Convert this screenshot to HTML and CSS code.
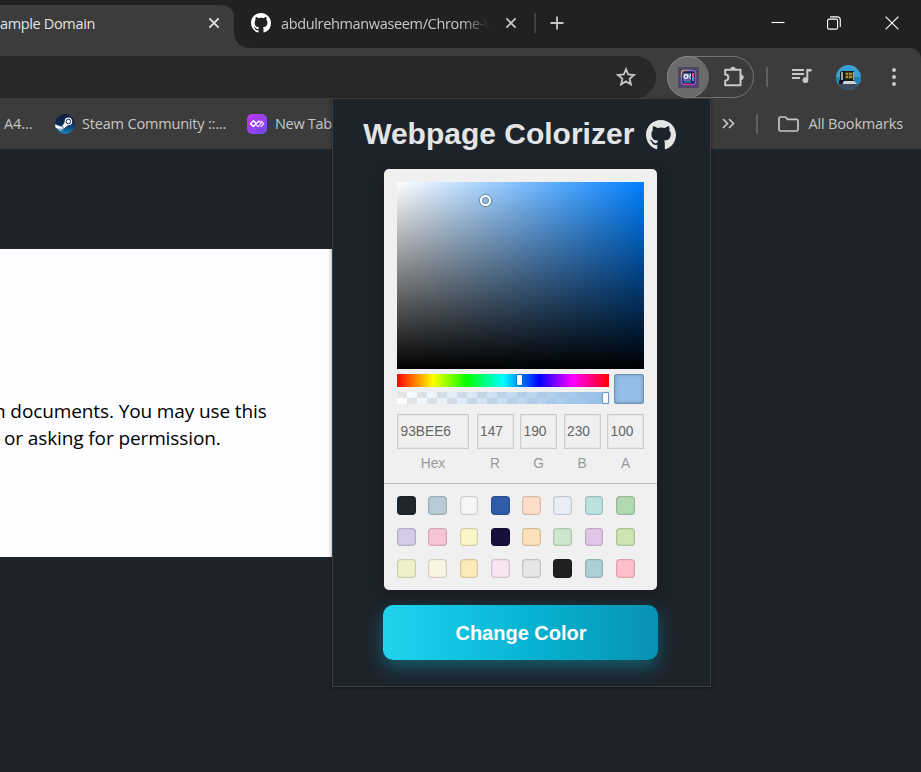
FILE: index.html
```html
<!DOCTYPE html>
<html lang="en">
<head>
<meta charset="utf-8">
<title>Webpage Colorizer</title>
<link rel="stylesheet" href="styles.css">
</head>
<body>
<svg class="defs" width="0" height="0">
  <symbol id="cat" viewBox="0 0 16 16"><path d="M8 0C3.58 0 0 3.58 0 8c0 3.54 2.29 6.53 5.47 7.59.4.07.55-.17.55-.38 0-.19-.01-.82-.01-1.49-2.01.37-2.53-.49-2.69-.94-.09-.23-.48-.94-.82-1.13-.28-.15-.68-.52-.01-.53.63-.01 1.08.58 1.23.82.72 1.21 1.87.87 2.33.66.07-.52.28-.87.51-1.07-1.78-.2-3.64-.89-3.64-3.95 0-.87.31-1.59.82-2.15-.08-.2-.36-1.02.08-2.12 0 0 .67-.21 2.2.82.64-.18 1.32-.27 2-.27s1.36.09 2 .27c1.53-1.04 2.2-.82 2.2-.82.44 1.1.16 1.92.08 2.12.51.56.82 1.27.82 2.15 0 3.07-1.87 3.75-3.65 3.95.29.25.54.73.54 1.48 0 1.07-.01 1.93-.01 2.2 0 .21.15.46.55.38A8.01 8.01 0 0 0 16 8c0-4.42-3.58-8-8-8z"/></symbol>
  <symbol id="cross" viewBox="0 0 12 12"><path d="M1.4 1.4l9.2 9.2M10.6 1.4l-9.2 9.2" fill="none" stroke="currentColor" stroke-width="1.8"/></symbol>
</svg>

<header class="browser">
  <div class="tabstrip">
    <div class="tab tab-active">
      <span class="tab-title">ample Domain</span>
      <svg class="tab-close" width="12" height="12"><use href="#cross"/></svg>
    </div>
    <div class="tab tab-idle">
      <svg class="favicon" width="20" height="20"><use href="#cat"/></svg>
      <span class="tab-title tab-fade">abdulrehmanwaseem/Chrome-W</span>
      <svg class="tab-close" width="12" height="12"><use href="#cross"/></svg>
      <i class="tab-sep"></i>
      <svg class="plus" width="14" height="14" viewBox="0 0 14 14"><path d="M7 .5v13M.5 7h13" stroke="currentColor" stroke-width="1.8"/></svg>
    </div>
    <div class="window-buttons">
      <svg width="14" height="14" viewBox="0 0 14 14"><path d="M.5 6.5h13" stroke="currentColor" stroke-width="1.1"/></svg>
      <svg width="14" height="14" viewBox="0 0 14 14" fill="none" stroke="currentColor" stroke-width="1.1"><rect x=".6" y="3.1" width="10" height="10" rx="1.4"/><path d="M3 .9h7.3a3 3 0 0 1 3 3v7.2"/></svg>
      <svg width="14" height="14" viewBox="0 0 14 14"><path d="M.6.6l12.8 12.8M13.4.6L.6 13.4" stroke="currentColor" stroke-width="1.2"/></svg>
    </div>
  </div>

  <div class="toolbar">
    <div class="omnibox">
      <svg width="20" height="20" viewBox="0 0 20 20"><path d="M10 2.2l2.2 5.3 5.8.5-4.4 3.8 1.3 5.6-4.9-3-4.9 3 1.3-5.6L2 8l5.8-.5z" fill="none" stroke="currentColor" stroke-width="1.8"/></svg>
    </div>
    <div class="extensions">
      <div class="ext-active">
        <svg width="21" height="21" viewBox="0 0 21 21">
          <defs><linearGradient id="ext" x1="0" y1="0" x2="1" y2="1"><stop offset="0" stop-color="#ffa24d"/><stop offset=".35" stop-color="#5e6fe0"/><stop offset=".7" stop-color="#f02e9b"/><stop offset="1" stop-color="#8a48ff"/></linearGradient></defs>
          <path d="M0 0h21v21H0z" fill="#4d4668"/>
          <rect x="3.5" y="3.5" width="14" height="14" rx="3" fill="#20204e" stroke="url(#ext)" stroke-width="1.4"/>
          <path d="M5 6h8v8H5z" fill="#59659c"/>
          <circle cx="8" cy="9.5" r="1.8" fill="none" stroke="#fff" stroke-width="1.2"/>
          <path d="M10.5 8l2 4M12.5 7v2" stroke="#e9eeff" stroke-width="1"/>
          <path d="M14 6h2v4h-2z" fill="#f0556e"/><path d="M14 10h2v4h-2z" fill="#44a5e8"/>
          <path d="M6 15h7" stroke="#34b7ef"/>
        </svg>
      </div>
      <svg class="puzzle" width="22" height="22" viewBox="0 0 22 22"><path d="M17.5 8.5V3.7H2.2v4.7c2 0 3.2 1.5 3.2 3.2s-1.2 3.1-3.2 3.1v4.6h15.3V8.5" fill="none" stroke="currentColor" stroke-width="2" stroke-linejoin="round"/><path d="M7.3 3.5a2.7 2.7 0 0 1 5.4 0zM17.8 8.5a2.8 2.8 0 0 1 0 5.6z" fill="currentColor"/></svg>
    </div>
    <i class="sep"></i>
    <svg class="media" width="20" height="16" viewBox="0 0 20 16"><path d="M0 2h12M0 6h12M0 10h8" stroke="currentColor" stroke-width="2"/><path d="M14.3 1H19.5v2.6h-3.2V12a2.9 2.9 0 1 1-2-2.6z" fill="currentColor"/></svg>
    <svg class="avatar" width="25" height="25" viewBox="0 0 25 25">
      <defs><clipPath id="round"><circle cx="12.5" cy="12.5" r="12.5"/></clipPath></defs>
      <g clip-path="url(#round)"><path d="M0 0h25v25H0z" fill="#3a9fd5"/><path d="M0 12h25v7H0z" fill="#2283b4"/><path d="M0 19h25v6H0z" fill="#3c4c5d"/>
      <path d="M4 7l2-1h12v9H8l-2 4H3v-3l1-1z" fill="#12161b"/><path d="M5 7h2v8H5z" fill="#9aa5ab"/><path d="M7 6h11v10H7z" fill="#15181b"/><path d="M17 7h1v8h-1z" fill="#a3a9a4"/><path d="M9 7h8v7H9z" fill="#453a10"/><path d="M10 8h2v2h-2zm3 0h3v2h-3zm-3 3h2v2h-2zm3 0h3v2h-3z" fill="#b58e1f"/><path d="M8 16h10l3 3H7z" fill="#d2d6d6"/></g>
    </svg>
    <svg class="menu" width="6" height="20" viewBox="0 0 6 20" fill="currentColor"><circle cx="3" cy="3" r="2"/><circle cx="3" cy="10" r="2"/><circle cx="3" cy="17" r="2"/></svg>
  </div>

  <div class="bookmarks">
    <span class="bm-a4">A4...</span>
    <svg class="bm-steam-icon" width="20" height="20" viewBox="0 0 20 20">
      <defs><linearGradient id="steam" x1="0" y1="0" x2="0" y2="1"><stop offset="0" stop-color="#101a38"/><stop offset=".5" stop-color="#0b2b59"/><stop offset="1" stop-color="#1787bd"/></linearGradient></defs>
      <circle cx="10" cy="10" r="10" fill="url(#steam)"/>
      <path d="M0 10.3l5.5 2.3 1.500-.3 3-4.200 3.200 3-4.400 3.400a2.900 2.900 0 0 1-5.500.4L.5 13.500z" fill="#fff"/>
      <circle cx="13.4" cy="7.4" r="3.8" fill="#fff"/><circle cx="13.4" cy="7.4" r="2.3" fill="#fff" stroke="#122a52" stroke-width="1"/>
      <path d="M4.6 14.1a1.800 1.800 0 1 0 1.700-1.900" fill="none" stroke="#174a7b" stroke-width=".8"/>
    </svg>
    <span class="bm-steam">Steam Community ::...</span>
    <svg class="bm-new-icon" width="20" height="20" viewBox="0 0 20 20">
      <defs><linearGradient id="tabg" x1="0" y1="0" x2="1" y2="1"><stop offset="0" stop-color="#c436ec"/><stop offset="1" stop-color="#6a4cf0"/></linearGradient></defs>
      <rect width="20" height="20" rx="5" fill="url(#tabg)"/>
      <path d="M8.600 8.700L6.500 6.700 3.500 9.700l2.800 2.900 5.600-5.700 1.300 1.300" fill="none" stroke="#fff" stroke-width="1.400" stroke-linecap="round" stroke-linejoin="round"/>
      <path d="M9.600 11.300l1.400 1.300 3.500-4M14.500 7.200l2.200 2.500-2.700 2.800" fill="none" stroke="#e9ceff" stroke-width="1.300" stroke-linecap="round" stroke-linejoin="round"/>
    </svg>
    <span class="bm-new">New Tab</span>
    <div class="bm-right">
      <svg width="13" height="11" viewBox="0 0 13 11"><path d="M1 1l4.5 4.5L1 10M7 1l4.5 4.5L7 10" fill="none" stroke="currentColor" stroke-width="1.7"/></svg>
      <i class="sep"></i>
      <svg class="folder" width="21" height="16" viewBox="0 0 21 16"><path d="M1 13.5v-11A1.500 1.500 0 0 1 2.500 1h5l2 2.300h9A1.500 1.500 0 0 1 20 4.800v8.700a1.500 1.500 0 0 1-1.500 1.500h-16A1.500 1.500 0 0 1 1 13.500z" fill="none" stroke="currentColor" stroke-width="1.7"/></svg>
      <span class="bm-all">All Bookmarks</span>
    </div>
  </div>
</header>

<main class="page">
  <section class="sheet">
    <p class="line first">n documents. You may use this</p>
    <p class="line second">or asking for permission.</p>
  </section>
</main>

<aside class="popup">
  <h1 class="title">Webpage Colorizer
    <svg width="30" height="30" viewBox="0 8 496 496"><path d="M165.9 397.4c0 2-2.3 3.6-5.2 3.6-3.3.3-5.6-1.3-5.6-3.6 0-2 2.3-3.6 5.2-3.6 3-.3 5.6 1.3 5.6 3.6zM244.8 8C106.1 8 0 113.3 0 252c0 110.9 69.8 205.8 169.5 239.2 12.8 2.3 17.3-5.6 17.3-12.1 0-6.2-.3-40.4-.3-61.4 0 0-70 15-84.7-29.8 0 0-11.4-29.1-27.8-36.6 0 0-22.9-15.7 1.6-15.4 0 0 24.9 2 38.6 25.8 21.9 38.6 58.6 27.5 72.9 20.9 2.3-16 8.8-27.1 16-33.7-55.9-6.2-112.3-14.3-112.3-110.5 0-27.5 7.6-41.3 23.6-58.9-2.6-6.5-11.1-33.3 2.6-67.9 20.9-6.5 69 27 69 27 20-5.6 41.5-8.5 62.8-8.500s42.800 2.900 62.800 8.500c0 0 48.100-33.600 69-27 13.700 34.700 5.200 61.400 2.600 67.900 16 17.700 25.800 31.500 25.800 58.900 0 96.500-58.900 104.200-114.800 110.500 9.200 7.900 17 22.900 17 46.400 0 33.700-.3 75.400-.3 83.600 0 6.500 4.600 14.400 17.300 12.100C428.200 457.800 496 362.900 496 252 496 113.300 383.500 8 244.800 8z"/></svg>
  </h1>
  <div class="picker">
    <div class="controls">
      <div class="saturation"><i class="sat-pointer"></i></div>
      <div class="sliders">
        <div class="tracks">
          <div class="hue"><i class="handle handle-hue"></i></div>
          <div class="alpha"><i class="handle handle-alpha"></i></div>
        </div>
        <div class="preview"></div>
      </div>
      <div class="fields">
        <label class="field"><span class="value">93BEE6</span><span>Hex</span></label>
        <label class="field"><span class="value">147</span><span>R</span></label>
        <label class="field"><span class="value">190</span><span>G</span></label>
        <label class="field"><span class="value">230</span><span>B</span></label>
        <label class="field"><span class="value">100</span><span>A</span></label>
      </div>
    </div>
    <div class="presets">
      <i style="background:#20262e"></i><i style="background:#b9ccd5"></i><i style="background:#f6f5f3"></i><i style="background:#315ca8"></i><i style="background:#fddcc8"></i><i style="background:#e9eef5"></i><i style="background:#bae2df"></i><i style="background:#b2d9b4"></i>
      <i style="background:#d5cbe9"></i><i style="background:#f6c4d5"></i><i style="background:#fbf5ca"></i><i style="background:#190f3d"></i><i style="background:#fce0b9"></i><i style="background:#cde7cf"></i><i style="background:#e2c6e8"></i><i style="background:#cce3b2"></i>
      <i style="background:#eff2c9"></i><i style="background:#fcf4e3"></i><i style="background:#fbeaba"></i><i style="background:#f7e5f2"></i><i style="background:#e7e5e7"></i><i style="background:#202020"></i><i style="background:#aecfd3"></i><i style="background:#ffbeca"></i>
    </div>
  </div>
  <button class="apply">Change Color</button>
</aside>
</body>
</html>
```
FILE: styles.css
```css
* { box-sizing: border-box; }
body {
  margin: 0;
  width: 921px;
  height: 772px;
  overflow: hidden;
  position: relative;
  background: #1f242c;
  font-family: "Open Sans", "Noto Sans", sans-serif;
}
svg { display: block; flex: none; }
.defs { position: absolute; }

/* Browser chrome */
.browser {
  background: linear-gradient(#202221 60px, #3c3c3c 60px);
  color: #c7c7c7;
  font-size: 14.5px;
}
.tabstrip { display: flex; height: 48px; background: #3c3c3c; }
.tab { display: flex; align-items: center; height: 48px; white-space: nowrap; }
.tab-active {
  width: 234px;
  padding-bottom: 2px;
  position: relative;
  color: #e3e3e3;
  background: linear-gradient(#202221, #202221) right top / 20px 20px no-repeat #3c3c3c;
}
.tab-active::before {
  content: "";
  position: absolute;
  inset: 5px 0 0 0;
  background: #3c3c3c;
  border-radius: 0 12px 0 0;
  box-shadow: 0 -5px #202221;
}
.tab-active > * { position: relative; }
.tab-active .tab-title { width: 207.5px; letter-spacing: -.35px; }
.tab-idle {
  width: 495px;
  padding: 0 0 2px 17px;
  background: #202221;
  border-radius: 0 0 0 15px;
}
.favicon { fill: #fff; margin-right: 10px; }
.tab-fade {
  width: 208px;
  overflow: hidden;
  margin-right: 16px;
  letter-spacing: -.35px;
  -webkit-mask-image: linear-gradient(90deg, #000 180px, transparent);
  mask-image: linear-gradient(90deg, #000 180px, transparent);
}
.tab-sep { width: 2px; height: 20px; background: #3f4140; margin: 0 13.5px 0 17px; }
.window-buttons {
  flex: 1;
  display: flex;
  align-items: center;
  gap: 43px;
  padding: 0 0 2px 42px;
  background: #202221;
  color: #fff;
}
.window-buttons svg:nth-child(2) { margin: 0 1px 0 -1px; }
.toolbar {
  display: flex;
  align-items: center;
  height: 50px;
  padding-top: 8px;
  background: #3c3c3c;
  border-radius: 0 11px 0 0;
}
.omnibox {
  width: 656px;
  height: 42px;
  display: flex;
  align-items: center;
  justify-content: flex-end;
  padding-right: 20px;
  border-radius: 0 21px 21px 0;
  background: #282828;
}
.extensions {
  width: 87px;
  height: 42px;
  margin-left: 11px;
  display: flex;
  align-items: center;
  border: 1px solid #747474;
  border-radius: 21px;
}
.ext-active {
  width: 42px;
  height: 42px;
  margin-left: -1px;
  display: flex;
  align-items: center;
  justify-content: center;
  border: 1px solid #858585;
  border-right-color: #6b6b69;
  border-radius: 50%;
  background: #6b6b69;
}
.puzzle { margin-left: 14px; }
.sep { width: 2px; height: 20px; background: #606060; border-radius: 1px; }
.toolbar .sep { margin-left: 12px; }
.media { margin: 0 0 3px 24px; }
.avatar { margin-left: 24px; }
.menu { margin-left: 29.5px; }
.bookmarks { display: flex; align-items: center; height: 51px; padding-left: 4px; white-space: nowrap; }
.bm-a4 { width: 51px; letter-spacing: -.1px; }
.bm-steam { width: 172px; padding-left: 7px; letter-spacing: -.18px; }
.bm-new { padding-left: 8px; letter-spacing: -.3px; }
.bm-right { margin-left: auto; display: flex; align-items: center; width: 199px; }
.bm-right .sep { margin: 0 20px 0 21px; }
.bm-all { margin-left: 9.5px; letter-spacing: -.17px; }

/* Page under the popup */
.page { padding-top: 100px; }
.sheet { width: 334px; height: 308px; padding-top: 149px; background: #fdfdff; color: #000; }
.line { margin: 0; font-size: 19px; line-height: 27px; letter-spacing: -.11px; white-space: nowrap; }
.first { margin-left: -6px; }
.second { margin-left: 4px; }

/* Extension popup */
.popup {
  position: absolute;
  left: 332px;
  top: 98px;
  width: 379px;
  height: 589px;
  padding-right: 1px;
  border: 1px solid #3d3d3b;
  background: #1d232b;
  display: flex;
  flex-direction: column;
  align-items: center;
  box-shadow: 0 1px 4px rgba(0, 0, 0, .45);
  font-family: "Liberation Sans", sans-serif;
}
.title {
  display: flex;
  align-items: center;
  gap: 12px;
  height: 36px;
  margin: 17px 0 17px -3px;
  font-size: 30px;
  line-height: 36px;
  color: #e3e5e4;
}
.title svg { fill: #e3e5e4; margin: 2px 0 0 -.5px; }
.picker {
  width: 273px;
  height: 421px;
  margin-left: -1px;
  border-radius: 5px;
  background: #f0f0f0;
  box-shadow: 0 4px 16px rgba(15, 12, 20, .4);
}
.controls { height: 315px; padding: 13px 13px 0; border-bottom: 1px solid #bcbcbc; }
.saturation {
  position: relative;
  height: 187px;
  background: linear-gradient(to top, #000, transparent), linear-gradient(to right, #fff, #007fff);
}
.sat-pointer {
  position: absolute;
  left: 83px;
  top: 13px;
  width: 11px;
  height: 11px;
  border: 2px solid #fff;
  border-radius: 50%;
  box-shadow: 0 0 1px 1px rgba(0, 0, 0, .3), inset 0 0 1px 1px rgba(0, 0, 0, .3);
}
.sliders { display: flex; gap: 5px; margin-top: 5px; }
.tracks { width: 212px; }
.hue {
  position: relative;
  height: 13px;
  background: linear-gradient(to right, #f00, #ff0 17%, #0f0 33%, #0ff 50%, #00f 67%, #f0f 83%, #f00);
}
.alpha {
  position: relative;
  height: 12px;
  margin-top: 5px;
  background:
    linear-gradient(to right, rgba(147, 190, 230, 0), #93bee6),
    repeating-conic-gradient(#fff 0 25%, #e6e6e6 0 50%) 10px 6px / 20px 12px;
}
.handle {
  position: absolute;
  top: 1px;
  width: 5px;
  height: 10px;
  border-radius: 1px;
  background: #fff;
  box-shadow: 0 0 2px rgba(0, 0, 0, .6);
}
.handle-hue { left: 120px; }
.handle-alpha { left: 206px; box-shadow: 0 0 1px 1px #5f94c2; }
.preview {
  width: 30px;
  height: 30px;
  border-radius: 3px;
  background: #93bee6;
  box-shadow: inset 0 0 0 1px rgba(0, 0, 0, .15), inset 0 0 5px rgba(0, 0, 0, .25);
}
.fields {
  display: grid;
  grid-template-columns: 73px 37px 37px 37px 37px;
  column-gap: 6.5px;
  margin-top: 10px;
  font-size: 13.75px;
}
.field { display: flex; flex-direction: column; align-items: center; color: #999; line-height: 16px; }
.field:first-child { margin-right: 1px; }
.value {
  width: 100%;
  height: 35px;
  margin-bottom: 7px;
  padding-left: 3.5px;
  line-height: 36px;
  color: #666;
  box-shadow: inset 0 0 0 1.25px #ccc;
}
.presets {
  display: grid;
  grid-template-columns: repeat(8, 18.75px);
  grid-auto-rows: 18.75px;
  gap: 12.5px;
  padding: 12.4px 13px;
}
.presets i { border-radius: 4px; box-shadow: inset 0 0 0 1.25px rgba(0, 0, 0, .15); }
.apply {
  width: 275px;
  height: 55px;
  margin: 15px 0 0 -1px;
  padding: 2px 0 0 1px;
  border: 0;
  border-radius: 10px;
  background: linear-gradient(to right, #22d3ee, #06b6d4 50%, #0891b2);
  box-shadow: 0 7px 18px rgba(6, 182, 212, .4);
  color: #fff;
  font: bold 20px "Liberation Sans", sans-serif;
}
```
